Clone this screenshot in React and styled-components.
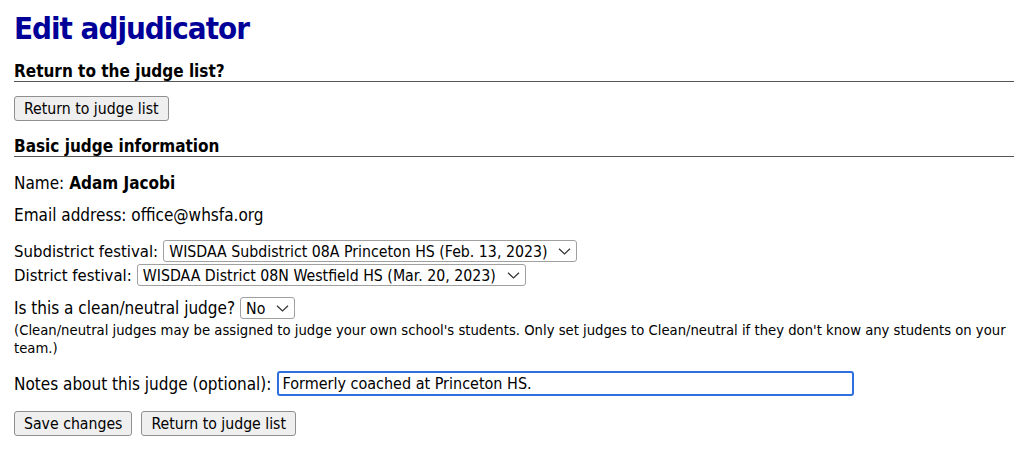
import React from "react";
import styled, { createGlobalStyle } from "styled-components";

const Global = createGlobalStyle`
  html, body { margin: 0; padding: 0; background: #fff; }
  body { font-family: "DejaVu Sans Condensed", "DejaVu Sans", sans-serif; font-size: 17px; color: #000; }
`;

const Page = styled.div`
  padding: 8px 10px 0 14px;
`;

const Title = styled.h1`
  margin: 0 0 13px;
  font-size: 31px;
  line-height: 40px;
  letter-spacing: -1px;
  font-weight: bold;
  color: #000099;
`;

const SectionHeading = styled.h3`
  margin: 0 0 14px;
  font-size: 17px;
  line-height: 20px;
  font-weight: bold;
  border-bottom: 1px solid #555;
`;

const Para = styled.p`
  margin: 0 0 ${(p) => p.$gap ?? 8}px;
  line-height: 24px;
`;

const Small = styled.p`
  margin: 0 0 14px;
  font-size: 14.7px;
  line-height: 18px;
`;

const Row = styled.div`
  display: flex;
  align-items: center;
  gap: ${(p) => p.$gap ?? 5}px;
  margin-bottom: ${(p) => p.$mb ?? 0}px;
`;

const Label = styled.span`
  font-size: ${(p) => p.$size ?? 17}px;
`;

const Button = styled.button`
  font: inherit;
  font-size: 15.7px;
  height: 25px;
  padding: 0 9px;
  background: #efefef;
  border: 1px solid #8f8f8f;
  border-radius: 3px;
  color: #000;
`;

const SelectWrap = styled.span`
  position: relative;
  display: inline-flex;
`;

const Select = styled.select`
  appearance: none;
  font: inherit;
  font-size: 15.75px;
  height: 22px;
  padding: 0 28px 0 5px;
  border: 1px solid #a0a0a0;
  border-radius: 3px;
  background: #fff;
  color: #000;
`;

const Chevron = styled.svg`
  position: absolute;
  right: 6px;
  top: 8px;
  pointer-events: none;
`;

const TextInput = styled.input`
  font: inherit;
  font-size: 16px;
  width: 577px;
  height: 25px;
  box-sizing: border-box;
  padding: 0 3px;
  border: 2px solid #2f6fde;
  border-radius: 3px;
  outline: none;
  color: #000;
`;

function Dropdown({ value }) {
  return (
    <SelectWrap>
      <Select defaultValue={value}>
        <option>{value}</option>
      </Select>
      <Chevron width="13" height="7" viewBox="0 0 13 7">
        <path d="M1 0.8 L6.5 6 L12 0.8" fill="none" stroke="#333" strokeWidth="1.2" />
      </Chevron>
    </SelectWrap>
  );
}

export default function App() {
  return (
    <>
      <Global />
      <Page>
        <Title>Edit adjudicator</Title>
        <SectionHeading>Return to the judge list?</SectionHeading>
        <Row $mb={15}>
          <Button>Return to judge list</Button>
        </Row>
        <SectionHeading>Basic judge information</SectionHeading>
        <Para $gap={8}>
          Name: <b>Adam Jacobi</b>
        </Para>
        <Para $gap={13}>Email address: office@whsfa.org</Para>
        <Row $mb={2} $gap={5}>
          <Label $size={16.6}>Subdistrict festival:</Label>
          <Dropdown value="WISDAA Subdistrict 08A Princeton HS (Feb. 13, 2023)" />
        </Row>
        <Row $mb={11} $gap={5}>
          <Label $size={16.6}>District festival:</Label>
          <Dropdown value="WISDAA District 08N Westfield HS (Mar. 20, 2023)" />
        </Row>
        <Row $mb={2}>
          <Label>Is this a clean/neutral judge?</Label>
          <Dropdown value="No" />
        </Row>
        <Small>
          (Clean/neutral judges may be assigned to judge your own school's students. Only set
          judges to Clean/neutral if they don't know any students on your team.)
        </Small>
        <Row $mb={15} $gap={6}>
          <Label>Notes about this judge (optional):</Label>
          <TextInput defaultValue="Formerly coached at Princeton HS." />
        </Row>
        <Row $gap={9}>
          <Button>Save changes</Button>
          <Button>Return to judge list</Button>
        </Row>
      </Page>
    </>
  );
}
